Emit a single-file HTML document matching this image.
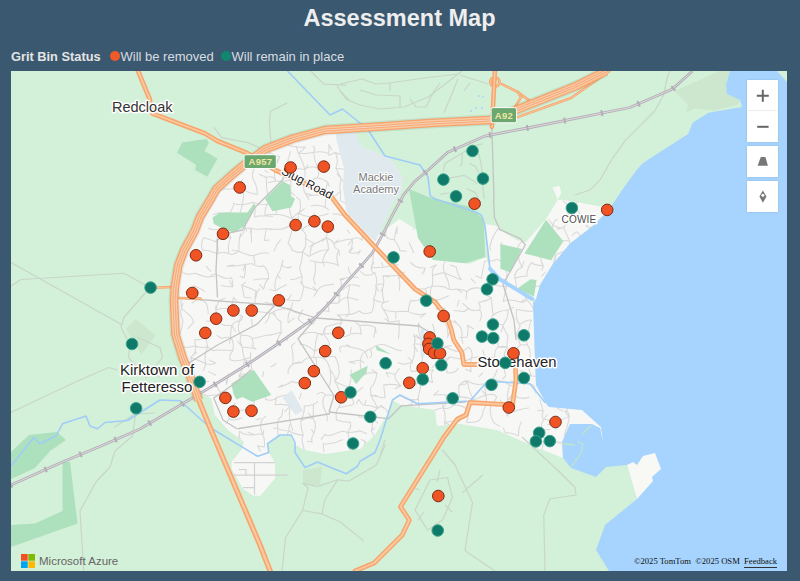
<!DOCTYPE html>
<html><head><meta charset="utf-8">
<style>
html,body{margin:0;padding:0;width:800px;height:581px;overflow:hidden;background:#3a586f;font-family:"Liberation Sans",sans-serif;}
#title{position:absolute;left:0;top:3.5px;width:799px;text-align:center;color:#eeeeee;font-weight:bold;font-size:23.5px;line-height:28px;}
#legend{position:absolute;left:11px;top:49px;width:400px;height:16px;font-size:13px;line-height:16px;color:#d8dde2;white-space:nowrap;}
#legend b{color:#e4e4e4;font-size:12.8px;}
.dot{display:inline-block;width:10px;height:10px;border-radius:50%;vertical-align:-1px;}
#map{position:absolute;left:11px;top:71px;width:776px;height:500px;overflow:hidden;background:#d3f0d8;}
#map > svg{position:absolute;left:0;top:0;}
.ctl{position:absolute;left:736px;width:31px;background:#fff;box-shadow:0 0 2px rgba(0,0,0,0.15);}
.ctl svg{position:absolute;left:0;top:0;}
#logo{position:absolute;left:10px;top:483px;width:130px;height:20px;}
#attr{position:absolute;left:623px;top:484px;font-family:"Liberation Serif",serif;font-size:8.6px;line-height:12px;color:#111;white-space:nowrap;}
</style></head><body>
<div id="title">Assessment Map</div>
<div id="legend"><b style="position:absolute;left:0">Grit Bin Status</b><span class="dot" style="position:absolute;left:99px;top:2.4px;background:#f05a28"></span><span style="position:absolute;left:109.5px">Will be removed</span><span class="dot" style="position:absolute;left:209.5px;top:2.4px;background:#12876f"></span><span style="position:absolute;left:220.5px">Will remain in place</span></div>
<div id="map">
<svg width="776" height="500" viewBox="11 71 776 500">
<defs><clipPath id="uc"><path d="M248,160 L262,151 L292,141 L325,133 L336,134 L355,132 L361,146.5 L389.9,158.6 L403.1,177.8 L400.7,192.3 L392.3,203.1 L378,236 L390,226 L399.5,219 L420,232 L440,257 L469,264 L486,257 L490,269 L500,279 L533,300 L534.5,345 L536,385 L547,405 L582,410 L601,427 L603,442 L592,424 L570,424 L562,442 L563,458 L535,447 L497,430 L460,424 L437,426 L435,410 L401,405 L392,400 L387,415 L375,435 L360,449 L325,454 L305,450 L295,445 L290,435 L280,435 L268,444 L268.2,451.4 L275,462.7 L275,478.6 L260.2,495.7 L253.4,495.7 L243.2,488.9 L231.8,469.5 L231.8,461.6 L242,449 L244,442 L228,430 L215,415 L211,398 L200,393 L193,374 L186,357 L180,335 L178,300 L179,286 L182.4,265.4 L188.4,249.9 L198.75,231 L203.9,217.2 L214.2,200 L220.6,188.8 L237.8,173.4 Z"/><path d="M485,224 L497,226 L500,230 L517,240 L526,242 L546,219 L557.8,199.8 L552.5,187.5 L559.5,185.8 L561.3,192.8 L557.8,199.8 L573.5,201.5 L601.6,206.8 L610,208 L592.8,226 L570,243.5 L552.5,264.6 L540,285 L536,299 L533,300 L500,279 L490,269 Z"/></clipPath></defs>
<rect x="0" y="0" width="800" height="600" fill="#d3f0d8"/>
<g fill="#f7f7f6"><path d="M248,160 L262,151 L292,141 L325,133 L336,134 L355,132 L361,146.5 L389.9,158.6 L403.1,177.8 L400.7,192.3 L392.3,203.1 L378,236 L390,226 L399.5,219 L420,232 L440,257 L469,264 L486,257 L490,269 L500,279 L533,300 L534.5,345 L536,385 L547,405 L582,410 L601,427 L603,442 L592,424 L570,424 L562,442 L563,458 L535,447 L497,430 L460,424 L437,426 L435,410 L401,405 L392,400 L387,415 L375,435 L360,449 L325,454 L305,450 L295,445 L290,435 L280,435 L268,444 L268.2,451.4 L275,462.7 L275,478.6 L260.2,495.7 L253.4,495.7 L243.2,488.9 L231.8,469.5 L231.8,461.6 L242,449 L244,442 L228,430 L215,415 L211,398 L200,393 L193,374 L186,357 L180,335 L178,300 L179,286 L182.4,265.4 L188.4,249.9 L198.75,231 L203.9,217.2 L214.2,200 L220.6,188.8 L237.8,173.4 Z"/><path d="M485,224 L497,226 L500,230 L517,240 L526,242 L546,219 L557.8,199.8 L552.5,187.5 L559.5,185.8 L561.3,192.8 L557.8,199.8 L573.5,201.5 L601.6,206.8 L610,208 L592.8,226 L570,243.5 L552.5,264.6 L540,285 L536,299 L533,300 L500,279 L490,269 Z"/></g>
<g clip-path="url(#uc)" fill="none" stroke-linecap="round"><path stroke="#d8d8d8" stroke-width="1.05" d="M338.6,134.9 Q338.0,142.9 339.0,143.1 M338.6,134.9 L342.2,132.7 M288.8,145.5 Q297.7,147.9 305.2,147.0 M305.2,147.0 Q303.3,150.5 298.2,153.1 M313.3,146.3 Q315.7,147.9 313.6,152.2 M328.9,144.6 Q329.3,149.5 328.6,153.9 M328.9,144.6 L332.1,150.2 M339.0,143.1 L340.9,137.7 M350.7,144.9 Q355.5,144.7 358.6,145.1 M358.6,145.1 L358.9,140.8 M269.0,152.3 Q275.9,156.0 279.7,156.6 M269.0,152.3 L268.2,157.7 M279.7,156.6 Q276.4,162.1 275.1,165.2 M279.7,156.6 L276.9,163.5 M288.5,158.3 Q286.7,161.0 290.1,169.8 M288.5,158.3 L290.4,151.6 M298.2,153.1 Q305.8,154.2 313.6,152.2 M298.2,153.1 Q304.0,164.2 304.7,169.5 M298.2,153.1 L296.2,146.6 M313.6,152.2 Q324.2,150.8 328.6,153.9 M313.6,152.2 Q314.1,159.6 317.6,167.9 M335.1,152.4 Q340.9,154.9 351.0,155.6 M335.1,152.4 Q339.2,159.0 335.8,168.2 M335.1,152.4 L328.5,155.4 M351.0,155.6 L346.9,161.0 M363.0,157.2 Q372.8,161.4 376.5,159.7 M363.0,157.2 Q362.0,160.5 363.1,168.2 M376.5,159.7 Q383.5,153.1 387.5,153.6 M256.4,165.4 Q251.1,171.2 253.0,179.3 M264.7,170.3 L268.0,172.7 M275.1,165.2 Q273.6,174.5 275.6,181.1 M290.1,169.8 Q297.2,168.0 304.7,169.5 M290.1,169.8 L287.0,173.6 M304.7,169.5 Q309.2,164.9 317.6,167.9 M304.7,169.5 Q305.5,173.4 304.8,180.9 M304.7,169.5 L308.0,164.7 M317.6,167.9 Q320.3,174.9 316.9,177.9 M335.8,168.2 Q341.2,169.1 348.3,169.8 M335.8,168.2 Q338.7,173.6 341.2,178.5 M348.3,169.8 Q344.6,175.0 348.5,183.4 M348.3,169.8 L350.2,163.6 M363.1,168.2 Q367.5,171.3 376.7,168.5 M376.7,168.5 L371.8,172.2 M242.2,179.5 Q240.1,187.6 242.1,188.1 M253.0,179.3 Q258.0,187.0 257.1,194.4 M266.2,177.3 Q274.9,175.3 275.6,181.1 M266.2,177.3 Q266.1,187.2 267.6,194.9 M266.2,177.3 L259.1,174.3 M275.6,181.1 Q285.5,181.4 291.1,180.2 M275.6,181.1 L268.2,182.8 M291.1,180.2 Q290.5,186.5 290.8,192.0 M291.1,180.2 L285.3,177.2 M304.8,180.9 Q308.6,180.6 316.9,177.9 M304.8,180.9 Q301.9,189.8 305.9,194.4 M304.8,180.9 L310.8,179.2 M316.9,177.9 Q323.5,178.3 327.9,182.5 M327.9,182.5 Q324.2,190.7 328.0,194.2 M327.9,182.5 L329.2,186.4 M341.2,178.5 Q344.7,184.6 348.5,183.4 M341.2,178.5 Q338.9,187.5 340.5,191.2 M341.2,178.5 L336.9,173.7 M348.5,183.4 Q351.4,188.3 353.2,195.0 M359.7,184.0 Q370.1,178.0 377.1,177.1 M359.7,184.0 Q365.4,187.0 363.6,194.1 M359.7,184.0 L365.6,180.7 M377.1,177.1 Q378.0,177.3 383.9,181.8 M377.1,177.1 Q379.4,185.8 376.1,191.2 M383.9,181.8 L382.7,176.0 M396.1,176.8 Q404.3,177.1 412.7,179.4 M396.1,176.8 L403.9,178.2 M219.9,191.2 Q222.4,187.5 227.6,189.3 M227.6,189.3 Q234.8,188.7 242.1,188.1 M242.1,188.1 Q247.1,193.1 257.1,194.4 M242.1,188.1 Q245.1,192.7 242.2,204.8 M242.1,188.1 L234.9,189.6 M267.6,194.9 Q270.0,196.9 267.2,204.5 M267.6,194.9 L271.6,195.8 M279.0,191.2 Q274.3,194.9 276.3,205.7 M290.8,192.0 L294.7,195.4 M305.9,194.4 Q305.9,192.5 312.1,195.3 M305.9,194.4 L308.9,199.8 M312.1,195.3 Q317.2,195.3 328.0,194.2 M312.1,195.3 L308.0,196.0 M328.0,194.2 Q325.2,196.8 325.1,207.2 M340.5,191.2 Q340.6,199.3 340.0,200.4 M340.5,191.2 L335.4,195.8 M353.2,195.0 Q360.0,197.9 363.6,194.1 M353.2,195.0 Q351.8,199.6 353.9,207.6 M376.1,191.2 Q381.1,192.7 387.8,188.6 M376.1,191.2 L383.0,190.3 M387.8,188.6 Q389.6,198.9 389.8,201.9 M233.6,203.4 Q237.1,204.6 242.2,204.8 M233.6,203.4 Q234.2,204.5 230.3,212.6 M242.2,204.8 Q246.2,204.4 252.9,202.3 M242.2,204.8 Q240.0,214.0 238.7,217.4 M252.9,202.3 Q259.0,204.9 267.2,204.5 M252.9,202.3 Q256.5,207.3 254.4,217.0 M267.2,204.5 Q267.8,201.1 276.3,205.7 M267.2,204.5 Q264.7,208.4 265.0,215.8 M276.3,205.7 Q277.7,208.1 275.7,214.7 M276.3,205.7 L275.0,198.4 M288.4,200.1 Q288.7,208.6 292.0,218.7 M288.4,200.1 L288.0,194.3 M300.0,200.3 Q301.5,210.4 298.6,213.0 M300.0,200.3 L296.5,197.2 M311.3,206.0 Q317.5,204.1 325.1,207.2 M325.1,207.2 L328.5,209.6 M340.0,200.4 Q349.5,205.4 353.9,207.6 M353.9,207.6 Q353.2,208.5 358.6,207.2 M353.9,207.6 Q351.0,207.5 352.5,215.0 M353.9,207.6 L359.5,209.9 M358.6,207.2 Q366.8,208.1 373.4,203.8 M358.6,207.2 Q357.9,214.9 363.2,219.9 M568.3,205.0 Q574.8,204.6 576.9,202.2 M568.3,205.0 Q564.9,210.1 569.3,215.5 M568.3,205.0 L563.4,201.4 M576.9,202.2 Q575.7,209.2 580.4,214.4 M219.0,212.8 L213.2,214.5 M230.3,212.6 Q232.2,221.2 227.4,230.1 M230.3,212.6 L224.9,213.3 M238.7,217.4 Q241.1,218.5 245.0,226.3 M254.4,217.0 Q256.9,215.8 265.0,215.8 M265.0,215.8 Q268.7,214.2 275.7,214.7 M265.0,215.8 L272.5,216.4 M275.7,214.7 Q280.9,213.8 292.0,218.7 M292.0,218.7 Q296.7,213.5 298.6,213.0 M292.0,218.7 Q293.0,218.0 292.4,224.5 M298.6,213.0 Q304.7,217.2 316.5,217.0 M298.6,213.0 Q296.8,222.8 302.4,230.3 M298.6,213.0 L304.4,208.8 M316.5,217.0 Q318.7,216.2 328.2,213.7 M316.5,217.0 Q312.0,224.2 310.7,224.7 M316.5,217.0 L313.8,213.6 M337.4,214.1 Q346.7,217.7 352.5,215.0 M337.4,214.1 L332.8,214.0 M363.2,219.9 Q368.3,216.7 372.6,216.4 M363.2,219.9 Q365.2,225.0 363.2,226.0 M363.2,219.9 L357.3,223.2 M372.6,216.4 Q369.1,220.0 371.8,230.1 M372.6,216.4 L375.4,211.1 M557.3,219.5 Q554.1,219.8 553.0,225.3 M569.3,215.5 Q568.1,222.2 563.6,227.4 M588.5,215.2 Q588.7,219.8 586.5,226.5 M588.5,215.2 L584.2,220.1 M208.4,228.3 Q213.3,231.2 220.7,228.5 M220.7,228.5 Q219.4,233.1 215.9,241.7 M220.7,228.5 L226.5,232.8 M227.4,230.1 Q228.1,230.9 230.8,237.8 M227.4,230.1 L222.5,224.3 M245.0,226.3 Q245.6,229.3 250.2,228.1 M245.0,226.3 Q245.3,231.1 239.5,238.2 M245.0,226.3 L246.6,231.2 M250.2,228.1 Q256.5,230.2 266.4,228.5 M250.2,228.1 Q251.9,237.5 251.4,242.1 M250.2,228.1 L251.8,232.3 M266.4,228.5 Q276.4,229.7 281.7,229.2 M266.4,228.5 Q265.0,235.3 264.5,240.4 M266.4,228.5 L271.9,229.8 M281.7,229.2 Q290.9,225.7 292.4,224.5 M292.4,224.5 Q292.7,230.5 288.1,243.1 M302.4,230.3 Q303.3,226.8 310.7,224.7 M302.4,230.3 Q307.8,235.1 305.3,238.7 M327.9,231.2 Q333.5,231.5 334.7,229.1 M327.9,231.2 Q327.1,233.8 325.9,237.8 M347.2,230.0 L349.7,233.3 M363.2,226.0 Q371.1,226.5 371.8,230.1 M363.2,226.0 Q362.4,233.6 362.2,240.1 M363.2,226.0 L364.1,220.7 M371.8,230.1 L367.6,228.8 M386.2,230.1 Q384.9,236.2 387.3,237.9 M397.2,226.7 Q395.8,230.9 394.1,239.8 M397.2,226.7 L396.9,233.4 M413.7,229.4 Q414.9,226.4 421.9,228.3 M497.7,229.1 Q505.8,232.1 506.2,229.7 M497.7,229.1 Q491.7,238.2 491.2,242.2 M543.9,231.9 Q550.5,231.2 553.0,225.3 M543.9,231.9 L547.3,235.1 M553.0,225.3 Q561.5,229.6 563.6,227.4 M553.0,225.3 Q550.4,231.4 553.8,239.7 M553.0,225.3 L548.9,219.8 M563.6,227.4 Q566.3,233.8 569.6,240.7 M563.6,227.4 L557.2,229.3 M576.3,231.8 Q579.1,232.3 580.9,238.4 M576.3,231.8 L572.2,235.3 M586.5,226.5 Q589.3,227.2 598.9,229.2 M203.5,237.7 Q208.2,238.7 215.9,241.7 M203.5,237.7 Q200.1,244.8 202.6,250.4 M215.9,241.7 Q220.7,236.6 230.8,237.8 M215.9,241.7 Q218.9,245.6 217.7,253.7 M230.8,237.8 Q227.3,244.2 228.9,253.5 M239.5,238.2 Q238.8,243.5 238.8,251.2 M239.5,238.2 L240.8,233.4 M264.5,240.4 L269.3,240.1 M280.5,239.8 Q275.7,245.0 274.1,251.0 M288.1,243.1 Q293.1,249.4 291.7,249.9 M305.3,238.7 Q308.1,239.5 314.4,243.7 M305.3,238.7 Q307.5,246.0 302.5,251.7 M314.4,243.7 Q318.1,242.6 325.9,237.8 M314.4,243.7 Q310.1,246.3 310.1,255.9 M314.4,243.7 L309.1,246.9 M325.9,237.8 Q330.6,239.0 334.4,243.6 M325.9,237.8 Q328.5,242.4 328.4,249.7 M325.9,237.8 L322.2,241.3 M334.4,243.6 Q341.8,239.7 352.4,239.1 M334.4,243.6 Q332.9,246.8 338.9,250.3 M334.4,243.6 L338.3,239.8 M352.4,239.1 Q357.5,235.8 362.2,240.1 M352.4,239.1 Q353.0,246.2 349.0,252.3 M352.4,239.1 L348.5,244.9 M387.3,237.9 Q390.9,239.5 394.1,239.8 M394.1,239.8 Q399.0,246.1 399.9,250.6 M409.0,242.4 Q411.1,246.4 413.6,252.5 M423.7,240.8 Q428.0,236.2 431.3,237.3 M423.7,240.8 L423.2,235.6 M491.2,242.2 Q488.8,247.9 490.7,249.8 M502.0,242.6 Q499.3,247.5 503.3,249.0 M520.8,242.6 Q527.2,240.6 526.7,238.2 M520.8,242.6 Q518.8,244.3 517.3,248.6 M520.8,242.6 L526.6,237.5 M543.7,236.8 Q548.4,236.5 553.8,239.7 M543.7,236.8 L540.9,241.7 M553.8,239.7 Q561.2,241.0 569.6,240.7 M569.6,240.7 L569.9,246.5 M192.5,250.5 L197.7,250.2 M202.6,250.4 Q206.9,249.8 217.7,253.7 M217.7,253.7 Q221.2,251.5 228.9,253.5 M228.9,253.5 Q230.7,256.1 238.8,251.2 M238.8,251.2 Q248.2,255.6 253.7,255.7 M238.8,251.2 L232.3,250.1 M253.7,255.7 Q262.3,251.7 268.6,253.2 M253.7,255.7 L254.9,263.5 M291.7,249.9 Q299.0,253.5 302.5,251.7 M291.7,249.9 L298.1,252.5 M302.5,251.7 Q309.4,257.7 310.1,255.9 M302.5,251.7 Q302.4,260.9 299.6,267.6 M310.1,255.9 Q320.4,249.3 328.4,249.7 M328.4,249.7 Q323.2,255.4 322.7,262.0 M338.9,250.3 Q334.8,257.1 338.6,265.6 M338.9,250.3 L339.6,255.2 M349.0,252.3 Q356.3,254.8 360.4,250.7 M349.0,252.3 L353.3,247.5 M360.4,250.7 L358.1,254.3 M373.1,253.3 Q373.5,263.8 371.0,267.8 M399.9,250.6 L406.3,251.2 M423.8,250.7 Q426.2,252.3 436.6,248.7 M503.3,249.0 Q505.9,254.4 502.3,261.4 M503.3,249.0 L500.8,253.8 M517.3,248.6 Q517.8,259.6 521.9,267.5 M517.3,248.6 L515.4,253.8 M533.4,251.4 Q538.5,251.7 542.1,253.2 M533.4,251.4 L538.1,250.7 M542.1,253.2 Q538.8,258.0 543.4,265.9 M556.1,254.6 Q560.5,252.8 565.1,250.7 M556.1,254.6 Q554.9,256.2 553.1,264.7 M556.1,254.6 L554.6,261.7 M206.1,266.3 L210.8,271.4 M227.3,266.1 Q236.8,266.3 245.2,264.4 M227.3,266.1 L233.2,264.9 M245.2,264.4 Q252.9,263.3 252.8,264.0 M245.2,264.4 Q246.0,269.3 244.1,278.0 M245.2,264.4 L243.1,270.5 M252.8,264.0 Q259.3,268.1 263.1,265.7 M263.1,265.7 Q268.5,269.0 268.7,278.8 M281.9,264.1 Q283.6,269.0 291.7,266.7 M281.9,264.1 Q281.3,270.0 277.3,275.5 M281.9,264.1 L283.0,260.0 M291.7,266.7 L287.8,268.1 M299.6,267.6 Q301.1,275.3 302.2,276.2 M315.0,261.6 Q320.6,263.4 322.7,262.0 M315.0,261.6 Q316.4,271.0 313.5,279.2 M315.0,261.6 L310.0,260.8 M322.7,262.0 Q333.7,262.6 338.6,265.6 M322.7,262.0 L324.1,265.7 M348.6,267.4 Q347.6,268.5 351.9,276.8 M360.9,263.7 L361.4,268.6 M371.0,267.8 Q373.3,267.5 383.1,267.2 M371.0,267.8 Q371.8,273.8 374.7,272.6 M371.0,267.8 L373.8,262.4 M383.1,267.2 Q387.0,266.7 398.3,264.5 M383.1,267.2 L381.6,262.5 M410.5,262.1 Q415.1,268.8 425.3,267.9 M425.3,267.9 Q422.7,274.2 422.2,273.9 M425.3,267.9 L424.1,271.9 M436.5,264.8 Q431.2,268.8 432.5,275.2 M436.5,264.8 L430.6,267.4 M443.0,266.6 Q443.7,266.0 443.9,272.5 M443.0,266.6 L444.8,261.9 M456.3,267.2 Q457.9,275.8 461.3,279.7 M456.3,267.2 L450.5,265.1 M484.6,261.5 Q487.1,260.9 494.4,260.6 M484.6,261.5 Q483.4,266.7 481.4,278.4 M494.4,260.6 Q494.7,258.0 502.3,261.4 M502.3,261.4 Q508.3,267.7 506.5,279.2 M521.9,267.5 Q514.4,269.9 514.8,278.3 M521.9,267.5 L524.0,261.4 M531.3,262.5 Q534.2,265.3 543.4,265.9 M531.3,262.5 Q526.2,270.1 527.0,276.3 M543.4,265.9 L541.9,270.2 M183.1,272.3 Q185.5,275.7 195.4,273.2 M195.4,273.2 Q205.8,277.7 209.7,276.8 M209.7,276.8 Q212.5,272.5 217.8,275.3 M209.7,276.8 L214.8,276.3 M217.8,275.3 Q227.3,280.2 231.0,277.5 M231.0,277.5 Q232.8,278.7 232.7,286.8 M244.1,278.0 L240.2,276.2 M253.9,280.0 Q257.9,278.7 268.7,278.8 M268.7,278.8 Q265.7,280.4 263.6,289.1 M277.3,275.5 Q273.6,282.9 275.5,291.0 M277.3,275.5 L280.4,278.4 M290.5,279.2 Q293.5,280.3 302.2,276.2 M302.2,276.2 Q301.2,284.1 303.8,286.5 M313.5,279.2 L315.2,284.7 M339.8,279.2 Q342.2,278.5 351.9,276.8 M339.8,279.2 Q343.1,283.0 339.6,291.5 M339.8,279.2 L343.9,279.6 M351.9,276.8 L358.1,277.4 M364.0,274.4 Q370.3,276.8 374.7,272.6 M364.0,274.4 L360.0,271.2 M374.7,272.6 Q378.2,280.5 375.7,285.6 M383.0,275.6 Q394.1,276.0 398.0,275.2 M383.0,275.6 Q384.4,279.2 383.4,285.9 M383.0,275.6 L389.2,277.2 M398.0,275.2 Q399.0,278.6 406.4,277.6 M398.0,275.2 Q400.7,280.9 399.3,290.3 M398.0,275.2 L404.7,272.1 M432.5,275.2 Q437.2,274.4 443.9,272.5 M432.5,275.2 Q433.3,283.7 431.8,286.4 M443.9,272.5 Q448.8,275.1 461.3,279.7 M443.9,272.5 Q449.4,281.3 449.4,289.3 M471.3,278.9 L475.4,283.0 M481.4,278.4 L475.9,275.7 M491.8,278.0 Q496.6,280.9 506.5,279.2 M491.8,278.0 Q490.8,279.4 494.2,284.4 M491.8,278.0 L493.3,282.0 M506.5,279.2 Q507.8,283.6 506.8,286.3 M514.8,278.3 Q521.8,275.7 527.0,276.3 M514.8,278.3 Q516.9,282.1 516.0,290.4 M545.6,272.0 L541.6,276.1 M185.5,291.8 L193.1,289.5 M193.8,285.7 Q203.0,289.5 204.4,291.4 M193.8,285.7 Q191.7,289.0 196.3,300.1 M221.2,285.6 Q228.9,287.0 232.7,286.8 M232.7,286.8 L229.6,280.8 M241.8,285.4 Q253.2,288.5 257.0,292.0 M241.8,285.4 Q243.1,290.2 244.2,297.3 M241.8,285.4 L245.4,282.3 M257.0,292.0 Q256.1,298.9 254.9,297.9 M257.0,292.0 L259.6,288.8 M263.6,289.1 L259.8,284.6 M275.5,291.0 Q279.8,287.5 286.4,284.8 M275.5,291.0 L269.8,289.6 M303.8,286.5 Q314.1,289.5 317.2,291.0 M303.8,286.5 Q302.2,296.5 299.8,300.6 M303.8,286.5 L300.2,281.7 M317.2,291.0 Q319.7,285.9 327.7,285.1 M317.2,291.0 Q315.0,294.4 314.0,296.3 M317.2,291.0 L312.9,286.9 M327.7,285.1 L333.8,284.2 M339.6,291.5 Q342.6,289.8 349.6,284.6 M339.6,291.5 Q340.5,295.3 338.6,303.0 M349.6,284.6 Q357.6,285.1 359.8,286.5 M349.6,284.6 Q349.1,291.1 347.4,297.2 M375.7,285.6 Q383.5,281.9 383.4,285.9 M375.7,285.6 Q377.1,290.8 373.5,299.5 M375.7,285.6 L378.4,290.9 M383.4,285.9 Q381.1,290.2 384.1,302.4 M383.4,285.9 L381.1,291.4 M425.1,288.7 Q427.4,287.4 431.8,286.4 M425.1,288.7 Q428.1,293.2 424.3,297.9 M425.1,288.7 L417.9,289.1 M431.8,286.4 Q441.3,284.6 449.4,289.3 M431.8,286.4 Q429.0,292.5 431.2,298.5 M449.4,289.3 Q454.3,289.9 456.2,289.1 M456.2,289.1 Q465.4,290.1 466.7,291.9 M456.2,289.1 L461.9,292.5 M466.7,291.9 Q470.4,286.7 481.5,288.2 M466.7,291.9 L466.1,298.9 M481.5,288.2 Q485.1,287.7 494.2,284.4 M494.2,284.4 Q500.8,286.9 506.8,286.3 M506.8,286.3 Q513.6,285.2 516.0,290.4 M506.8,286.3 Q505.1,291.4 503.3,301.5 M516.0,290.4 Q524.9,287.8 526.7,286.3 M526.7,286.3 Q537.5,286.1 544.0,286.0 M526.7,286.3 Q523.6,294.1 526.5,299.3 M180.9,301.3 Q181.3,303.8 181.4,308.6 M180.9,301.3 L181.4,297.3 M196.3,300.1 Q201.2,298.6 206.0,302.8 M196.3,300.1 L192.2,303.0 M206.0,302.8 Q208.5,307.7 208.1,313.9 M219.5,300.2 Q217.6,303.1 215.8,310.0 M219.5,300.2 L225.1,298.2 M233.6,297.4 Q233.1,300.6 230.4,309.9 M233.6,297.4 L236.5,300.3 M244.2,297.3 L251.2,297.9 M254.9,297.9 Q256.0,300.8 252.9,310.7 M254.9,297.9 L256.1,290.9 M265.5,302.2 Q273.0,304.7 280.3,302.3 M280.3,302.3 Q280.6,298.6 287.9,299.9 M287.9,299.9 Q294.9,300.8 299.8,300.6 M287.9,299.9 L291.2,294.8 M326.8,301.7 Q329.5,303.6 338.6,303.0 M326.8,301.7 Q328.8,307.1 329.1,311.7 M338.6,303.0 Q340.9,298.5 347.4,297.2 M347.4,297.2 Q351.3,298.2 358.1,300.0 M347.4,297.2 Q349.3,307.8 349.0,314.3 M373.5,299.5 Q378.4,302.2 384.1,302.4 M373.5,299.5 Q375.1,305.3 371.5,312.4 M384.1,302.4 Q379.8,304.2 383.3,309.6 M384.1,302.4 L388.4,301.0 M410.6,300.3 Q413.6,302.2 424.3,297.9 M410.6,300.3 Q407.9,309.5 408.5,311.6 M424.3,297.9 L420.0,297.8 M431.2,298.5 Q436.7,301.0 442.3,298.5 M431.2,298.5 Q435.4,301.2 436.9,309.6 M431.2,298.5 L437.1,300.8 M442.3,298.5 L448.7,295.8 M459.0,300.2 L457.3,306.2 M478.7,302.6 Q488.6,300.0 491.4,298.0 M478.7,302.6 Q481.2,307.4 479.5,310.1 M491.4,298.0 Q492.0,306.4 493.1,315.4 M491.4,298.0 L487.4,295.8 M503.3,301.5 Q508.9,298.1 520.6,302.3 M520.6,302.3 Q526.8,301.7 526.5,299.3 M520.6,302.3 L525.0,299.1 M526.5,299.3 Q533.6,306.5 533.5,310.9 M526.5,299.3 L525.9,294.7 M181.4,308.6 Q184.9,311.0 190.3,316.0 M181.4,308.6 Q179.4,313.6 182.8,320.3 M181.4,308.6 L182.9,303.4 M190.3,316.0 Q195.2,322.7 192.5,323.4 M215.8,310.0 Q223.9,306.5 230.4,309.9 M215.8,310.0 Q216.4,317.0 219.7,322.1 M215.8,310.0 L215.9,305.7 M230.4,309.9 Q235.9,315.4 241.7,315.5 M230.4,309.9 L227.9,305.7 M241.7,315.5 Q244.1,318.1 239.2,321.6 M241.7,315.5 L238.8,322.7 M252.9,310.7 Q259.3,312.1 269.8,312.9 M269.8,312.9 Q270.7,313.8 274.3,311.2 M269.8,312.9 Q269.1,319.4 265.2,323.1 M269.8,312.9 L274.3,314.3 M274.3,311.2 Q280.2,308.1 291.2,308.5 M274.3,311.2 Q273.8,316.7 280.9,321.8 M291.2,308.5 Q292.7,312.8 300.7,313.6 M291.2,308.5 Q286.9,315.5 288.3,322.8 M291.2,308.5 L292.5,302.6 M300.7,313.6 Q296.5,319.5 299.7,320.3 M300.7,313.6 L302.8,309.6 M316.9,312.7 Q323.3,309.5 329.1,311.7 M316.9,312.7 Q317.0,322.4 310.2,325.0 M337.1,314.7 Q340.5,315.6 349.0,314.3 M337.1,314.7 Q340.9,314.9 341.8,322.4 M337.1,314.7 L342.5,319.3 M349.0,314.3 Q352.7,314.8 359.7,310.8 M349.0,314.3 L345.9,316.8 M359.7,310.8 Q361.9,315.3 371.5,312.4 M383.3,309.6 Q389.0,311.6 395.7,311.7 M383.3,309.6 Q387.4,314.5 388.9,321.9 M395.7,311.7 Q402.0,311.1 408.5,311.6 M395.7,311.7 L396.0,318.6 M408.5,311.6 Q417.0,316.5 425.9,313.4 M425.9,313.4 L420.4,317.7 M436.9,309.6 Q440.7,307.3 445.1,308.6 M459.5,310.9 Q465.1,313.0 468.2,308.1 M459.5,310.9 L453.9,310.5 M468.2,308.1 Q471.4,311.5 479.5,310.1 M468.2,308.1 L462.7,303.3 M479.5,310.1 Q483.3,312.9 479.9,320.7 M493.1,315.4 Q497.8,310.9 507.7,310.1 M493.1,315.4 Q490.3,315.7 492.7,323.4 M507.7,310.1 Q509.1,316.8 503.2,324.7 M507.7,310.1 L513.6,307.2 M516.9,309.2 Q527.2,312.0 533.5,310.9 M516.9,309.2 Q514.8,318.7 519.6,324.4 M182.8,320.3 Q183.1,325.4 179.5,335.8 M192.5,323.4 L187.9,328.6 M206.4,321.1 Q209.3,320.9 219.7,322.1 M219.7,322.1 Q222.4,326.4 231.8,325.3 M231.8,325.3 Q237.5,319.6 239.2,321.6 M231.8,325.3 Q230.0,334.8 231.0,337.0 M231.8,325.3 L235.5,331.2 M239.2,321.6 Q236.8,331.3 241.3,335.3 M252.2,325.7 L251.8,319.1 M280.9,321.8 Q280.7,328.2 281.3,332.3 M288.3,322.8 L294.3,318.2 M299.7,320.3 Q301.2,323.5 310.2,325.0 M326.5,326.5 Q335.5,323.9 341.8,322.4 M326.5,326.5 Q323.2,329.1 323.5,333.8 M341.8,322.4 Q337.1,330.4 339.4,333.9 M351.4,327.4 L350.2,333.1 M359.7,325.5 Q370.1,324.2 375.3,327.6 M359.7,325.5 Q360.0,326.1 361.2,333.9 M359.7,325.5 L354.7,321.6 M375.3,327.6 Q375.1,332.6 373.9,337.2 M375.3,327.6 L376.1,332.2 M388.9,321.9 Q392.9,322.0 399.1,320.7 M388.9,321.9 L385.0,318.7 M399.1,320.7 Q399.5,331.6 398.5,338.6 M418.5,323.1 Q417.8,332.1 420.8,339.1 M418.5,323.1 L420.4,327.0 M432.6,324.0 Q435.9,333.3 432.5,337.7 M444.2,321.3 Q449.3,319.0 457.2,323.8 M444.2,321.3 Q448.9,327.8 447.6,337.5 M444.2,321.3 L449.7,320.6 M457.2,323.8 Q463.2,327.8 461.7,338.6 M457.2,323.8 L454.7,320.5 M467.3,325.3 Q468.7,327.8 467.3,337.0 M467.3,325.3 L473.5,329.0 M492.7,323.4 Q500.2,324.1 503.2,324.7 M503.2,324.7 Q502.7,327.1 508.0,336.3 M503.2,324.7 L501.3,332.2 M519.6,324.4 Q527.7,319.3 531.6,320.2 M519.6,324.4 Q521.1,327.0 515.9,334.0 M531.6,320.2 Q528.9,323.9 528.6,333.4 M194.9,339.6 Q200.7,340.7 204.9,336.6 M194.9,339.6 Q194.7,341.6 195.7,346.0 M204.9,336.6 Q206.0,337.7 207.7,346.6 M221.5,338.2 Q223.4,337.6 231.0,337.0 M221.5,338.2 L217.0,335.6 M231.0,337.0 Q234.6,343.4 232.7,350.6 M231.0,337.0 L229.4,343.3 M241.3,335.3 Q250.0,334.7 252.2,338.6 M241.3,335.3 Q238.5,341.0 242.5,347.4 M252.2,338.6 Q258.0,337.2 269.0,335.1 M252.2,338.6 L253.4,344.9 M269.0,335.1 Q271.4,335.2 281.3,332.3 M281.3,332.3 Q276.6,340.5 275.0,347.0 M287.1,336.1 L287.4,340.4 M300.5,334.9 Q309.8,330.7 317.8,333.2 M317.8,333.2 Q324.4,334.5 323.5,333.8 M317.8,333.2 Q315.3,341.3 314.7,351.5 M317.8,333.2 L322.4,335.2 M323.5,333.8 Q331.1,333.7 339.4,333.9 M323.5,333.8 Q330.0,342.5 329.8,345.1 M323.5,333.8 L325.3,328.7 M339.4,333.9 L339.1,328.5 M346.0,336.4 Q352.9,332.0 361.2,333.9 M346.0,336.4 L338.8,336.5 M413.8,334.7 Q414.8,336.9 420.8,339.1 M413.8,334.7 Q415.6,340.9 413.9,345.0 M413.8,334.7 L415.4,340.9 M420.8,339.1 Q428.1,338.2 432.5,337.7 M420.8,339.1 Q422.2,345.4 420.6,344.2 M420.8,339.1 L416.0,334.8 M447.6,337.5 L450.1,331.3 M461.7,338.6 L462.9,343.4 M467.3,337.0 L459.8,337.7 M493.0,334.3 Q499.1,339.0 497.8,347.1 M508.0,336.3 Q506.2,345.6 507.6,348.4 M515.9,334.0 Q519.2,341.5 520.4,345.2 M528.6,333.4 Q524.8,336.5 527.4,344.9 M528.6,333.4 L523.8,331.2 M184.4,347.1 Q186.7,348.1 195.7,346.0 M184.4,347.1 L176.5,346.5 M195.7,346.0 Q202.0,348.8 207.7,346.6 M195.7,346.0 Q196.2,353.9 190.6,357.5 M207.7,346.6 Q212.1,351.9 216.7,350.1 M207.7,346.6 Q203.5,356.4 205.9,364.0 M216.7,350.1 Q222.2,350.0 232.7,350.6 M232.7,350.6 Q228.9,355.7 229.9,359.3 M242.5,347.4 Q245.8,346.7 255.7,349.0 M242.5,347.4 Q242.2,350.6 244.5,359.2 M242.5,347.4 L237.8,341.2 M255.7,349.0 L251.6,345.4 M275.0,347.0 L271.0,348.7 M291.4,345.8 Q293.7,353.7 292.9,364.0 M291.4,345.8 L294.8,342.9 M299.5,344.1 Q307.2,344.3 314.7,351.5 M314.7,351.5 Q323.2,345.3 329.8,345.1 M314.7,351.5 L313.5,357.2 M339.5,347.4 Q344.1,344.9 351.1,347.2 M339.5,347.4 L340.6,352.0 M351.1,347.2 Q361.0,349.0 365.5,351.9 M351.1,347.2 L346.7,344.7 M365.5,351.9 Q369.7,347.5 370.4,349.7 M365.5,351.9 Q361.0,354.3 360.5,360.1 M365.5,351.9 L367.5,357.9 M370.4,349.7 Q374.6,345.1 382.9,344.3 M370.4,349.7 Q372.9,355.2 370.1,357.7 M382.9,344.3 Q387.1,345.6 396.3,349.8 M396.3,349.8 L401.6,350.8 M413.9,345.0 Q413.3,343.4 420.6,344.2 M413.9,345.0 Q416.1,351.1 412.3,361.9 M413.9,345.0 L417.3,351.5 M420.6,344.2 Q427.0,343.8 434.3,347.9 M420.6,344.2 Q424.9,355.0 421.2,362.4 M434.3,347.9 Q443.5,350.9 445.0,346.5 M434.3,347.9 L440.2,349.7 M445.0,346.5 Q455.6,352.6 460.4,350.7 M445.0,346.5 L451.4,345.8 M460.4,350.7 Q462.0,352.6 468.3,347.1 M468.3,347.1 Q473.5,351.0 471.6,358.0 M482.9,350.1 Q484.3,356.5 485.3,356.2 M497.8,347.1 Q505.5,345.1 507.6,348.4 M497.8,347.1 Q494.8,348.8 494.6,357.8 M497.8,347.1 L505.7,347.2 M507.6,348.4 Q502.8,351.8 505.1,359.0 M520.4,345.2 Q520.7,344.4 527.4,344.9 M520.4,345.2 L515.9,349.5 M527.4,344.9 Q532.1,351.0 528.9,361.1 M190.6,357.5 Q201.6,361.1 205.9,364.0 M190.6,357.5 Q194.4,367.1 193.2,370.6 M190.6,357.5 L196.4,352.2 M205.9,364.0 Q213.1,365.2 215.6,362.9 M205.9,364.0 L203.1,370.7 M215.6,362.9 L209.4,360.0 M229.9,359.3 Q233.3,362.4 244.5,359.2 M244.5,359.2 Q247.0,362.3 250.5,360.4 M244.5,359.2 Q243.4,369.2 238.9,375.9 M244.5,359.2 L250.7,357.2 M250.5,360.4 Q251.2,366.4 253.4,375.7 M250.5,360.4 L250.6,352.4 M276.2,363.5 L271.2,366.8 M292.9,364.0 Q300.4,362.3 301.5,362.7 M292.9,364.0 Q287.2,369.0 288.2,373.4 M292.9,364.0 L299.1,361.8 M301.5,362.7 Q305.9,356.4 315.8,357.4 M315.8,357.4 Q319.1,356.7 322.2,357.4 M315.8,357.4 L316.6,364.5 M322.2,357.4 Q327.2,356.4 335.0,356.6 M322.2,357.4 Q328.1,360.0 329.9,369.2 M335.0,356.6 Q338.8,362.7 339.1,371.0 M348.9,362.0 Q353.2,361.6 360.5,360.1 M348.9,362.0 L354.9,363.5 M360.5,360.1 Q359.4,368.6 362.9,375.1 M360.5,360.1 L363.9,362.7 M398.2,362.5 Q404.3,366.0 412.3,361.9 M412.3,361.9 Q408.7,365.4 411.5,371.6 M412.3,361.9 L407.9,357.0 M421.2,362.4 L422.4,366.7 M436.6,362.1 Q446.6,359.2 449.9,356.8 M436.6,362.1 L432.2,367.8 M449.9,356.8 Q457.6,358.8 461.6,359.2 M449.9,356.8 L444.8,362.9 M461.6,359.2 Q464.9,362.6 471.6,358.0 M471.6,358.0 Q479.4,356.2 485.3,356.2 M471.6,358.0 Q469.7,362.6 471.0,371.6 M485.3,356.2 Q486.9,357.1 494.6,357.8 M494.6,357.8 L490.6,357.6 M505.1,359.0 Q502.4,364.4 505.7,375.9 M505.1,359.0 L500.3,359.7 M519.3,362.5 Q521.1,365.4 528.9,361.1 M528.9,361.1 Q532.5,362.7 540.8,358.2 M528.9,361.1 Q527.6,369.7 531.9,375.9 M193.2,370.6 L192.4,362.9 M215.6,375.0 L208.7,371.6 M228.6,374.0 Q227.2,382.2 226.6,384.4 M238.9,375.9 Q249.6,377.9 253.4,375.7 M238.9,375.9 Q243.2,382.9 244.3,383.9 M238.9,375.9 L244.1,373.7 M253.4,375.7 Q251.2,379.5 251.9,386.4 M253.4,375.7 L249.5,369.7 M263.8,371.3 L262.5,376.7 M311.5,370.9 L318.2,372.1 M329.9,369.2 Q332.2,380.0 328.9,386.7 M329.9,369.2 L333.6,374.7 M339.1,371.0 Q340.3,374.0 334.9,381.5 M351.2,369.7 Q351.7,378.6 349.1,386.8 M362.9,375.1 Q369.2,371.9 376.9,373.0 M362.9,375.1 L366.4,372.9 M376.9,373.0 Q375.5,384.1 370.6,387.9 M376.9,373.0 L372.1,370.0 M386.0,372.5 Q393.2,373.6 394.9,374.7 M386.0,372.5 L388.6,376.7 M394.9,374.7 Q394.1,379.3 401.0,385.8 M394.9,374.7 L399.1,368.6 M411.5,371.6 Q419.4,370.3 423.3,371.4 M423.3,371.4 Q428.0,370.0 433.1,369.8 M423.3,371.4 Q422.8,377.3 421.4,380.1 M423.3,371.4 L416.1,370.5 M433.1,369.8 Q430.0,374.4 432.7,382.5 M446.8,372.6 Q455.5,374.1 458.1,368.3 M446.8,372.6 L446.6,366.6 M471.0,371.6 L465.8,369.2 M482.7,372.8 L479.3,376.4 M497.5,369.2 Q493.8,378.8 491.0,380.9 M505.7,375.9 L502.7,379.1 M519.9,370.5 Q525.5,373.0 531.9,375.9 M531.9,375.9 Q534.0,376.9 541.2,374.9 M531.9,375.9 L526.3,376.1 M208.9,381.6 L203.9,381.7 M216.2,385.1 Q220.9,393.8 221.5,395.1 M226.6,384.4 L226.0,379.7 M244.3,383.9 Q248.8,383.3 251.9,386.4 M251.9,386.4 Q252.4,388.9 253.4,394.3 M278.4,387.2 Q284.3,386.2 292.4,381.2 M278.4,387.2 L282.7,384.9 M292.4,381.2 Q297.0,384.3 300.9,380.8 M300.9,380.8 L303.9,385.8 M334.9,381.5 Q345.3,386.8 349.1,386.8 M334.9,381.5 Q341.0,391.5 340.6,398.8 M334.9,381.5 L334.7,375.8 M362.9,387.2 L357.7,391.7 M370.6,387.9 Q370.7,389.6 370.7,394.9 M383.7,385.0 Q390.7,383.4 401.0,385.8 M383.7,385.0 Q384.8,394.3 385.0,397.8 M401.0,385.8 L395.1,388.7 M407.6,385.3 Q416.5,386.1 421.4,380.1 M407.6,385.3 L411.8,382.9 M421.4,380.1 Q428.0,380.1 432.7,382.5 M421.4,380.1 Q420.7,388.9 418.2,397.1 M458.8,385.6 Q464.3,380.2 467.4,381.0 M458.8,385.6 Q458.7,392.6 459.4,396.8 M458.8,385.6 L463.8,384.2 M467.4,381.0 Q475.2,386.1 483.6,383.7 M467.4,381.0 Q468.6,391.5 473.8,399.8 M467.4,381.0 L464.9,384.8 M483.6,383.7 Q485.4,387.4 485.9,395.2 M491.0,380.9 Q501.9,379.4 509.5,384.9 M491.0,380.9 L496.5,379.2 M509.5,384.9 Q506.5,396.3 507.6,400.0 M509.5,384.9 L514.4,386.1 M516.9,381.6 Q525.6,382.6 534.0,385.5 M516.9,381.6 Q515.5,388.4 514.5,395.7 M516.9,381.6 L510.6,380.9 M534.0,385.5 L535.8,393.1 M207.4,395.6 Q212.9,394.7 221.5,395.1 M207.4,395.6 Q206.2,406.3 209.6,411.2 M207.4,395.6 L201.3,393.8 M221.5,395.1 Q226.2,393.0 231.9,396.8 M231.9,396.8 L225.5,398.5 M241.6,392.5 Q251.0,393.3 253.4,394.3 M241.6,392.5 L236.4,396.9 M253.4,394.3 Q255.8,403.2 252.4,408.1 M253.4,394.3 L251.8,388.4 M265.5,399.6 Q274.1,401.4 276.3,397.6 M265.5,399.6 L266.2,395.5 M276.3,397.6 Q282.3,395.8 291.4,394.0 M276.3,397.6 Q276.1,400.6 275.0,404.7 M291.4,394.0 Q288.3,398.1 290.1,406.4 M291.4,394.0 L286.0,396.7 M301.3,393.1 L299.6,398.9 M317.2,394.0 Q322.3,390.7 325.4,394.7 M325.4,394.7 Q336.9,395.3 340.6,398.8 M325.4,394.7 Q321.4,399.1 323.7,407.6 M340.6,398.8 Q342.6,400.5 338.5,407.7 M340.6,398.8 L335.0,396.2 M350.7,396.4 Q355.0,401.7 352.8,404.8 M358.8,399.2 Q362.3,405.7 364.8,405.2 M358.8,399.2 L356.3,403.8 M370.7,394.9 Q380.0,397.5 385.0,397.8 M370.7,394.9 Q375.9,404.6 377.8,408.2 M370.7,394.9 L377.1,395.7 M399.4,394.8 Q406.8,400.5 413.2,399.6 M413.2,399.6 Q418.8,400.5 418.2,397.1 M413.2,399.6 L410.7,407.1 M418.2,397.1 Q418.9,403.2 419.2,410.5 M433.8,394.9 Q443.0,394.6 445.7,394.5 M433.8,394.9 L438.4,390.9 M445.7,394.5 Q448.0,401.9 443.3,408.2 M459.4,396.8 Q466.2,396.5 473.8,399.8 M459.4,396.8 Q454.9,397.5 454.2,404.9 M459.4,396.8 L465.9,398.0 M473.8,399.8 Q483.1,396.0 485.9,395.2 M473.8,399.8 Q471.5,404.1 468.4,411.7 M485.9,395.2 Q494.7,392.5 496.6,397.2 M485.9,395.2 Q487.6,404.5 483.1,410.8 M485.9,395.2 L482.5,390.9 M496.6,397.2 Q493.8,403.5 490.4,407.3 M507.6,400.0 Q511.6,398.4 514.5,395.7 M507.6,400.0 L512.7,394.2 M514.5,395.7 Q521.1,400.2 529.2,397.2 M539.7,399.9 Q540.5,401.6 543.2,411.1 M230.3,408.3 Q228.2,416.8 229.0,418.5 M230.3,408.3 L235.4,403.3 M238.9,410.3 Q243.3,411.0 252.4,408.1 M238.9,410.3 L234.2,409.4 M252.4,408.1 L249.2,410.5 M275.0,404.7 Q286.1,403.6 290.1,406.4 M290.1,406.4 Q288.4,416.9 290.7,423.7 M290.1,406.4 L284.6,411.8 M304.2,406.0 Q306.0,406.4 313.3,404.4 M304.2,406.0 Q304.9,412.3 300.9,420.8 M313.3,404.4 Q313.5,411.0 313.0,418.4 M313.3,404.4 L317.9,401.6 M323.7,407.6 Q328.9,418.0 326.9,420.7 M338.5,407.7 Q346.9,406.0 352.8,404.8 M338.5,407.7 Q335.2,411.0 336.5,420.0 M364.8,405.2 Q371.7,405.1 377.8,408.2 M364.8,405.2 L365.9,400.2 M377.8,408.2 Q378.2,404.9 385.3,408.9 M377.8,408.2 Q371.0,412.6 372.0,418.2 M377.8,408.2 L380.8,405.4 M385.3,408.9 Q389.5,413.0 388.4,419.4 M385.3,408.9 L381.1,405.4 M409.3,404.1 Q411.3,408.7 419.2,410.5 M435.9,409.7 Q441.7,407.7 443.3,408.2 M435.9,409.7 L429.4,413.7 M443.3,408.2 Q448.1,409.8 454.2,404.9 M443.3,408.2 Q446.4,415.7 444.5,422.6 M443.3,408.2 L442.0,401.8 M454.2,404.9 Q465.3,405.0 468.4,411.7 M468.4,411.7 Q469.4,413.3 466.5,422.1 M483.1,410.8 Q482.7,417.5 478.4,421.0 M490.4,407.3 Q489.4,415.6 494.4,423.4 M502.6,406.1 Q508.5,411.4 514.9,411.4 M502.6,406.1 Q507.8,409.9 507.1,416.2 M502.6,406.1 L500.6,400.1 M514.9,411.4 Q519.0,409.0 528.6,407.9 M543.2,411.1 Q540.7,418.0 543.9,419.3 M543.2,411.1 L537.7,410.3 M557.6,408.5 L563.0,410.9 M566.0,411.2 Q568.3,410.4 569.3,416.6 M566.0,411.2 L568.5,406.7 M229.0,418.5 Q232.9,421.7 241.9,417.8 M229.0,418.5 L226.4,423.3 M256.0,419.9 L260.4,418.2 M262.1,419.3 Q258.8,428.4 263.0,435.0 M262.1,419.3 L265.7,416.2 M281.7,416.1 Q276.1,420.4 277.8,428.3 M281.7,416.1 L282.8,409.1 M290.7,423.7 Q287.8,426.3 289.5,431.0 M290.7,423.7 L292.7,430.4 M300.9,420.8 Q307.2,416.7 313.0,418.4 M300.9,420.8 Q300.5,427.8 303.4,435.4 M313.0,418.4 Q317.4,424.0 313.9,433.5 M313.0,418.4 L308.3,413.1 M336.5,420.0 Q346.9,422.9 350.1,422.0 M350.1,422.0 Q352.3,426.9 347.3,432.7 M358.4,416.7 Q365.3,417.9 372.0,418.2 M372.0,418.2 Q373.3,424.7 371.3,430.8 M372.0,418.2 L377.7,423.2 M444.5,422.6 Q451.0,420.5 460.3,421.1 M444.5,422.6 Q445.1,425.1 447.6,429.9 M444.5,422.6 L448.7,424.5 M460.3,421.1 L455.1,422.9 M466.5,422.1 Q469.8,423.5 478.4,421.0 M494.4,423.4 L499.6,426.1 M507.1,416.2 L509.0,412.5 M521.5,422.0 Q518.4,426.8 518.5,435.8 M543.9,419.3 Q546.0,418.3 555.4,423.9 M543.9,419.3 Q540.3,423.0 541.9,429.9 M543.9,419.3 L547.1,415.0 M555.4,423.9 Q564.7,417.7 569.3,416.6 M555.4,423.9 L547.8,424.6 M569.3,416.6 Q568.0,425.7 564.5,434.8 M569.3,416.6 L564.8,411.4 M239.7,431.3 Q244.6,435.8 254.3,434.7 M239.7,431.3 Q237.8,439.1 243.5,442.9 M239.7,431.3 L238.6,438.9 M254.3,434.7 Q261.3,433.0 263.0,435.0 M254.3,434.7 L248.1,432.2 M263.0,435.0 Q265.0,438.3 264.3,446.9 M263.0,435.0 L263.8,430.4 M277.8,428.3 Q280.5,430.3 289.5,431.0 M277.8,428.3 Q277.7,439.0 279.8,442.1 M277.8,428.3 L273.7,428.2 M289.5,431.0 Q293.3,434.2 303.4,435.4 M289.5,431.0 Q286.1,432.7 288.0,440.2 M303.4,435.4 Q301.4,436.9 302.3,442.0 M313.9,433.5 Q310.4,438.8 312.3,442.0 M313.9,433.5 L311.6,429.5 M325.1,434.2 Q326.5,436.9 334.8,433.9 M325.1,434.2 L321.1,439.4 M334.8,433.9 Q343.7,429.4 347.3,432.7 M347.3,432.7 Q357.4,432.1 359.6,430.8 M347.3,432.7 Q349.8,434.6 348.2,444.1 M359.6,430.8 L366.4,433.6 M371.3,430.8 Q377.5,441.3 376.9,446.8 M371.3,430.8 L374.3,428.1 M505.5,432.9 Q509.6,432.1 518.5,435.8 M505.5,432.9 Q501.0,444.0 503.9,447.6 M505.5,432.9 L503.2,428.0 M518.5,435.8 L518.9,429.6 M533.3,431.6 Q535.0,433.1 541.9,429.9 M533.3,431.6 L539.1,431.2 M541.9,429.9 Q542.4,436.4 545.2,440.8 M541.9,429.9 L549.9,429.6 M556.0,428.8 L557.0,421.4 M564.5,434.8 Q569.9,435.4 574.3,433.6 M564.5,434.8 Q563.5,436.1 569.9,442.5 M600.7,429.2 L603.5,434.1 M257.6,445.7 Q259.0,446.2 264.3,446.9 M257.6,445.7 L260.3,451.0 M302.3,442.0 Q305.2,451.4 305.5,459.8 M312.3,442.0 L307.3,441.3 M323.1,443.9 Q326.2,444.6 336.2,442.3 M323.1,443.9 L324.0,451.8 M336.2,442.3 L342.6,439.8 M348.2,444.1 Q349.0,447.0 350.7,457.5 M348.2,444.1 L349.1,439.7 M365.0,441.3 Q369.7,447.8 376.9,446.8 M365.0,441.3 Q363.3,449.4 362.9,456.9 M365.0,441.3 L361.0,439.6 M531.3,440.6 Q536.8,444.7 545.2,440.8 M531.3,440.6 Q528.1,447.3 528.1,456.7 M531.3,440.6 L534.0,445.1 M545.2,440.8 Q541.5,444.1 542.2,454.7 M554.5,441.0 Q560.4,444.5 569.9,442.5"/></g>
<path fill="#dfe9ee" d="M335.7,134.5 L355,132 L361,146.5 L389.9,158.6 L403.1,177.8 L400.7,192.3 L392.3,203.1 L375.4,241.7 L365.8,233.3 L346.5,211.6 L342.9,187.5 L344,168.2 L336.9,141.7 Z"/>
<path fill="#dfe9ee" d="M282.6,398 L291.6,390.3 L303.2,411 L295.5,414.8 Z"/>
<path fill="#dfe9ee" d="M420.6,328.4 L424.5,328.4 L424.5,356.8 L420.6,356.8 Z"/>
<path fill="#cce7cd" d="M674.6,91.3 L719.6,71 L730,71 L726.4,84.5 L727.5,94 L740,100 L737.6,104.8 L715,110.4 L694.9,108.2 L685.9,112.7 L688.1,104.8 Z M303,470 L322,467 L320,485 L303,485 Z M126,329 L136,318.7 L155.5,335.5 L141.3,354.8 Z"/>
<g fill="#ade0bc"><path d="M177,152.7 L182.2,142.4 L206.3,139 L208.9,142.4 L204.6,151 L217.5,158.7 L207.2,176.8 L195.1,169.9 L196,164.8 Z"/><path d="M212.5,217.5 L220,212.5 L247.5,212.5 L253.75,203.75 L256,206 L245,226 L233.75,232.5 L222.5,228.75 L213.75,223.75 Z"/><path d="M265,198.75 L282.5,181.25 L290,185 L291.25,196.25 L295,198.75 L291.25,207.5 L272.5,211.25 Z"/><path d="M409,189 L431,198 L471,207 L483.6,219.8 L485.2,257 L465,263.2 L433,260 L418,238 Z"/><path d="M500.4,243.9 L522,249 L510,272.3 L500.4,268.8 Z"/><path d="M524.5,253.4 L546,219.8 L563.3,241.3 L551.2,260.2 Z"/><path d="M518.5,287.8 L530.6,279.2 L536.6,280 L534,296.4 L518.5,289.5 Z"/><path d="M349.7,374.8 L367.7,365.8 L366.5,372.3 L356.1,383.9 Z"/><path d="M375.5,345.2 L391,354.2 L376.8,350.3 Z"/><path d="M231.25,383.75 L251.25,371.25 L253.75,370 L271.25,395 L252.5,401.9 L242.5,396.9 L236.25,399.4 L233.75,394.4 Z"/><path d="M11,452 L29,435 L57,432 L66,440 L50,451 L35,468 L11,479 Z"/><path d="M62.5,462 L70,462 L77.5,523.5 L11,547 L11,525 L35,523.5 L62.5,511 Z"/></g>
<g fill="none" stroke="#c9d6ca" stroke-width="1.2" stroke-linejoin="round"><path d="M11,286 L21,279.5 L123.75,273.25 L150,287.5"/><path d="M150,287.5 L123.75,317.5 L121,327.5 L130,345 L128.4,357.4 L146.5,378"/><path d="M11,262.5 L122.5,325"/><path d="M11,412.5 L42.5,397.5 L80,380 L108.75,367.5 L117.5,370"/><path d="M137.5,337.5 L160,347.5 L162.5,357.5 L152.5,370 L160,377.5"/><path d="M114,427.5 L134.5,414 L154.6,413"/><path d="M136,410 L134,425 L132.5,436 L115,451 L110,467 L96,482 L80,511 L83.75,572"/><path d="M287.2,102.9 L270.4,111.3 L269.4,121.7 L270.9,144.2"/><path d="M214,127.3 L221.6,137.6 L246.9,142.3 L260,148"/><path d="M310.7,71 L323.8,84.1 L346.3,85.1"/><path d="M337,86 L342.6,93.5 L350,101"/><path d="M340,84 L362,79 L376,84 L390,83 L424,78 L458,74 L462,71"/><path d="M340,91 L346,99 L360,105 L380,109 L404,107 L428,97 L444,85 L458,74"/><path d="M360,90 L376,95 L400,96 L400,108"/><path d="M390,83 L390,91"/><path d="M410,99 L416,107 L426,107 L434,91 L440,83"/><path d="M458,79 L444,113"/><path d="M460,75 L488,84"/><path d="M470,83 L464,91"/><path d="M302.5,483.2 L317.3,486.6 L337.7,479.8 L349,481 L376.4,465 L385.5,444.5"/><path d="M302.5,483.2 L308.2,487.7 L302.5,510.5 L285.5,537.7 L282,572"/><path d="M302.5,510.5 L321.8,513.9 L340,521.8 L363.9,541.1"/><path d="M337.7,479.8 L325.2,499 L321.8,513.9"/><path d="M522,437 L560,472.5 L575,487.5 L576,495 L550,498.75 L543.75,515 L545,571"/><path d="M442.5,450 L455,465 L472.5,502.5 L465,550 L467.5,552.5 L495,571"/><path d="M430,480 L447.5,477.5 L452.5,497.5 L442.5,520 L427.5,530 L415,510 L430,480"/><path d="M462.5,492.5 L480,477.5 L482.5,475"/><path d="M420,490 L412,487"/><path d="M445,505 L452,512"/><path d="M424,512 L418,520"/><path d="M437,482 L440,470"/><path d="M385,440 L380,455"/><path d="M670,71 L667.8,75.5 L663.3,95.8 L654.3,111.5 L625,140.8 L611.5,160 L600,180 L590,190 L575,195"/><path d="M443.4,171 L444.9,163.6 L463.9,151.9 L478.5,144.6 L482.9,143.9"/><path d="M462.4,153.4 L461.7,165.1 L459.5,165.8"/><path d="M449.2,178.2 L463.9,175.3 L474.1,181.2 L477,184.1"/><path d="M469.7,163.6 L475.6,166.5 L478.5,172.4"/><path d="M478.5,153.4 L481.4,165.1 L482.9,188.5 L484.3,198.7"/><path d="M466.8,188.5 L475.6,192.9 L478.5,198.7"/><path d="M440.5,194.3 L449.2,192.9"/></g>
<g fill="none" stroke="#d2d2d2" stroke-width="1.2"><path d="M254.5,462.7 V494.5 M234,462.7 H275 M234,475.2 H287.5 M243.2,487.7 H254.5 M238.6,469.5 L246,469.5 L246,475"/></g>
<g fill="none" stroke="#c3c3c3" stroke-width="1.3" stroke-linejoin="round"><path d="M216,270 L217.5,240 L225,233.75 L242.5,230 L255,207.5 L282.5,180 L285,172.5"/><path d="M216,270 L217.5,297.5"/><path d="M177.4,298 L275,305 L316,318 L419,326 L432,333.5"/><path d="M275,305 L257.4,323.9 L217.5,345 L185.2,365.2"/><path d="M316,318 L298,338.7 L334,395.5 L329,412"/><path d="M329,412 L388.4,418.7 L401.3,405.8 L465.8,402"/><path d="M237.5,428.75 L330,413.75"/><path d="M251,370 L232.5,385 L213.75,398 L223,420 L236.9,428.75"/><path d="M493.6,200 L494.4,217.2 L499.6,229.3 L520.2,238.7 L525.4,244.8 L503,284.3 L514,320 L516,340"/><path d="M491.9,127 L494,200"/></g>
<path fill="#a6d4fe" d="M730,71 L726,85 L727,94 L740,100 L742,107 L708.4,112.7 L692.6,122.8 L688.1,134 L647.6,160 L642,164 L636.6,170 L622.6,189.3 L608.6,210.3 L592.8,226 L570,243.5 L552.5,264.6 L540,285 L536,299 L533,303 L534.5,345 L536,385 L547,405 L549,407 L582,410 L601,427 L603,442 L600,428 L592,424 L570,424 L562,442 L563,458 L571,468 L596,477 L606,467 L627,465 L637,499 L605,525 L596,550 L609,571 L787,571 L787,82 L777,71 Z"/>
<path fill="#f8f8f4" d="M627,465 L633,462 L637,465 L643,456 L655,453 L661,469 L652,477 L653,481 L637,499 Z"/>
<g fill="none" stroke="#c2e3c8" stroke-width="1.3"><path d="M581.7,434.7 L590,426.5 L592,425.5"/><path d="M571.3,466.8 L581.6,452.3 L582.7,444 L577.5,442"/><path d="M562,443.5 L575,445"/></g>
<g fill="none" stroke="#9fcdf7" stroke-linejoin="round" stroke-linecap="round"><path stroke-width="1.6" d="M287.5,71 L330,115 L342.5,109 L367.5,129 L385,156 L420,165 L428,177 L430.2,195.8 L434.6,198.7 L475.6,211.9 L481.4,215 L485,225.8 L490,268.8 L499.6,279.2"/><path stroke-width="1.6" d="M11,466 L33.75,437.5 L40,443.75 L56,436 L62.5,423.75 L86,416 L90,426 L97.5,428.75 L105,422.5 L127.5,420.5 L160,400 L180,400.75 L210,427.5 L257.5,456.25 L268.75,452.5 L267.5,443.75 L280,435 L291.25,435 L295,442.5 L295,452.5 L305,467.5 L317.5,462 L346.25,473.75 L357.5,466.25 L360,461.25 L375,452.5 L380,440 L392.5,400 L400,395 L417.5,403.75 L470,401 L487.5,381.25 L530,383.75 L545,402.5"/><path stroke-width="4" stroke="#a6d4fe" d="M490,268.8 L499.6,279.2 L532.3,299"/></g>
<path fill="none" stroke="#b3aeb6" stroke-width="2.8" d="M11,485 L62.5,462 L101,446 L140,429 L210,387.5 L248,364 L282,341 L316,317 L332.2,300 L339,290.8 L359,268.4 L372.5,252.8 L383.7,232.6 L392.6,214.7 L403.8,194.6 L415,181.2 L428.4,170 L447.5,152.5 L485,136 L530,127.5 L630,107.5 L672.5,89 L692.5,71"/><path fill="none" stroke="#e4e0e4" stroke-width="0.9" d="M11,485 L62.5,462 L101,446 L140,429 L210,387.5 L248,364 L282,341 L316,317 L332.2,300 L339,290.8 L359,268.4 L372.5,252.8 L383.7,232.6 L392.6,214.7 L403.8,194.6 L415,181.2 L428.4,170 L447.5,152.5 L485,136 L530,127.5 L630,107.5 L672.5,89 L692.5,71"/>
<path fill="none" stroke="#b3aeb6" stroke-width="2" d="M9.8,482.3 L12.2,487.7 M44.5,466.8 L46.9,472.2 M79.4,451.7 L81.7,457.2 M114.4,436.9 L116.8,442.4 M148.2,420.6 L151.3,425.8 M180.9,401.2 L184.0,406.4 M213.5,381.8 L216.7,386.9 M245.8,361.8 L249.0,366.9 M277.2,340.6 L280.6,345.6 M308.3,318.8 L311.7,323.7 M334.0,292.5 L338.9,296.0 M359.1,263.6 L363.7,267.6 M380.1,232.9 L385.3,235.8 M397.8,199.3 L403.0,202.2 M423.4,170.2 L427.3,174.8 M453.7,146.5 L456.1,152.0 M489.5,132.1 L490.6,138.0 M526.8,125.0 L528.0,130.9 M564.1,117.6 L565.3,123.5 M601.3,110.2 L602.5,116.1 M637.4,101.0 L639.8,106.5 M671.3,86.1 L675.3,90.5"/>
<path fill="none" stroke="#f7a56d" stroke-width="2.6" stroke-linejoin="round" stroke-linecap="round" d="M517.7,92 L530.8,101.6"/><path fill="none" stroke="#fcc9a0" stroke-width="0.9" stroke-linejoin="round" stroke-linecap="round" d="M517.7,92 L530.8,101.6"/>
<path fill="none" stroke="#f7a56d" stroke-width="2.6" stroke-linejoin="round" stroke-linecap="round" d="M501.9,84.1 L517.7,92 L521.2,97.3 L515,106.9 L515,110"/><path fill="none" stroke="#fcc9a0" stroke-width="0.9" stroke-linejoin="round" stroke-linecap="round" d="M501.9,84.1 L517.7,92 L521.2,97.3 L515,106.9 L515,110"/>
<path fill="none" stroke="#f7a56d" stroke-width="2.6" stroke-linejoin="round" stroke-linecap="round" d="M516.8,117.4 L571,98 L609.6,71"/><path fill="none" stroke="#fcc9a0" stroke-width="0.9" stroke-linejoin="round" stroke-linecap="round" d="M516.8,117.4 L571,98 L609.6,71"/>
<circle cx="494.9" cy="81.9" r="4.5" fill="none" stroke="#f7a56d" stroke-width="3"/><circle cx="494.9" cy="81.9" r="4.5" fill="none" stroke="#fcc9a0" stroke-width="1"/>
<path fill="none" stroke="#f7a56d" stroke-width="4.5" stroke-linejoin="round" stroke-linecap="round" d="M491.9,127 L494.9,71"/><path fill="none" stroke="#fcc9a0" stroke-width="1.6" stroke-linejoin="round" stroke-linecap="round" d="M491.9,127 L494.9,71"/>
<path fill="none" stroke="#f7a56d" stroke-width="2.6" stroke-linejoin="round" stroke-linecap="round" d="M150.6,287.8 L174,287"/><path fill="none" stroke="#fcc9a0" stroke-width="0.9" stroke-linejoin="round" stroke-linecap="round" d="M150.6,287.8 L174,287"/>
<path fill="none" stroke="#f7a56d" stroke-width="2.6" stroke-linejoin="round" stroke-linecap="round" d="M177.4,298 L200.6,298.6"/><path fill="none" stroke="#fcc9a0" stroke-width="0.9" stroke-linejoin="round" stroke-linecap="round" d="M177.4,298 L200.6,298.6"/>
<path fill="none" stroke="#f7a56d" stroke-width="4.8" stroke-linejoin="round" stroke-linecap="round" d="M138.1,71 L149.4,98.5 L152.5,113.5 L205,133.5 L217.5,141 L247,153 L275,170 L330,195 L345,215 L375,247 L415,289 L435,302 L447,317 L451.4,330 L453.8,340 L462,352.8 L463.8,364.5 L477,364.5"/><path fill="none" stroke="#fcc9a0" stroke-width="1.8" stroke-linejoin="round" stroke-linecap="round" d="M138.1,71 L149.4,98.5 L152.5,113.5 L205,133.5 L217.5,141 L247,153 L275,170 L330,195 L345,215 L375,247 L415,289 L435,302 L447,317 L451.4,330 L453.8,340 L462,352.8 L463.8,364.5 L477,364.5"/>
<path fill="none" stroke="#f7a56d" stroke-width="4.8" stroke-linejoin="round" stroke-linecap="round" d="M515,355 L516,380 L512.5,405 L470,402.5 L466,415 L457.5,419 L444,437 L436,450 L400.5,506.8 L409.3,520 L402.3,535 L374.2,563 L355,571"/><path fill="none" stroke="#fcc9a0" stroke-width="1.8" stroke-linejoin="round" stroke-linecap="round" d="M515,355 L516,380 L512.5,405 L470,402.5 L466,415 L457.5,419 L444,437 L436,450 L400.5,506.8 L409.3,520 L402.3,535 L374.2,563 L355,571"/>
<path fill="none" stroke="#000" stroke-opacity="0.07" stroke-width="11" stroke-linejoin="round" d="M198.7,400 L196.1,393 L189.3,374 L182.4,356.8 L175.5,334.4 L174,300 L175,286 L178.4,265.4 L184.4,249.9 L194.75,231 L199.9,217.2 L210.2,200 L216.6,188.8 L233.8,173.4 L244.2,164.8 L265,149.3 L292.5,138.75 L325,130 L380,126.5 L430,123 L490,120 L515,110.4 L576.3,85.9 L606,71"/>
<path fill="none" stroke="#f7a56d" stroke-width="5.5" stroke-linejoin="round" stroke-linecap="round" d="M270.5,572 L260,545 L211,430 L198.7,400 L196.1,393"/><path fill="none" stroke="#fcc9a0" stroke-width="2.2" stroke-linejoin="round" stroke-linecap="round" d="M270.5,572 L260,545 L211,430 L198.7,400 L196.1,393"/>
<g fill="none" stroke-linejoin="round" stroke-linecap="butt"><path stroke="#f6a36c" stroke-width="8.5" d="M198.7,400 L196.1,393 L189.3,374 L182.4,356.8 L175.5,334.4 L174,300 L175,286 L178.4,265.4 L184.4,249.9 L194.75,231 L199.9,217.2 L210.2,200 L216.6,188.8 L233.8,173.4 L244.2,164.8 L265,149.3 L292.5,138.75 L325,130 L380,126.5 L430,123 L490,120 L515,110.4 L576.3,85.9 L606,71"/><path stroke="#fbc9a2" stroke-width="5.9" d="M198.7,400 L196.1,393 L189.3,374 L182.4,356.8 L175.5,334.4 L174,300 L175,286 L178.4,265.4 L184.4,249.9 L194.75,231 L199.9,217.2 L210.2,200 L216.6,188.8 L233.8,173.4 L244.2,164.8 L265,149.3 L292.5,138.75 L325,130 L380,126.5 L430,123 L490,120 L515,110.4 L576.3,85.9 L606,71"/><path stroke="#f7aa76" stroke-width="3.0999999999999996" d="M198.7,400 L196.1,393 L189.3,374 L182.4,356.8 L175.5,334.4 L174,300 L175,286 L178.4,265.4 L184.4,249.9 L194.75,231 L199.9,217.2 L210.2,200 L216.6,188.8 L233.8,173.4 L244.2,164.8 L265,149.3 L292.5,138.75 L325,130 L380,126.5 L430,123 L490,120 L515,110.4 L576.3,85.9 L606,71"/><path stroke="#f3d9c6" stroke-width="0.9" d="M198.7,400 L196.1,393 L189.3,374 L182.4,356.8 L175.5,334.4 L174,300 L175,286 L178.4,265.4 L184.4,249.9 L194.75,231 L199.9,217.2 L210.2,200 L216.6,188.8 L233.8,173.4 L244.2,164.8 L265,149.3 L292.5,138.75 L325,130 L380,126.5 L430,123 L490,120 L515,110.4 L576.3,85.9 L606,71"/></g>
<g fill="#a6d4fe"><circle cx="479" cy="96" r="0.9"/><circle cx="483" cy="96.5" r="0.9"/><circle cx="471" cy="111" r="1"/><circle cx="476" cy="108" r="1"/><circle cx="482" cy="108" r="1"/></g>
<g font-family="Liberation Sans, sans-serif" stroke="#fff" stroke-width="3" paint-order="stroke" stroke-linejoin="round">
<text x="112" y="112" font-size="14.5" fill="#333">Redcloak</text>
<text x="157" y="375" font-size="15" fill="#222" text-anchor="middle">Kirktown of</text>
<text x="157" y="392" font-size="15" fill="#222" text-anchor="middle">Fetteresso</text>
<text x="477.5" y="367" font-size="14.8" fill="#222">Stonehaven</text>
<text x="579" y="222.5" font-size="10" fill="#4d4d4d" text-anchor="middle" letter-spacing="0.2">COWIE</text>
<text x="376" y="181" font-size="11" fill="#777" text-anchor="middle" stroke-width="2">Mackie</text>
<text x="376" y="193" font-size="11" fill="#777" text-anchor="middle" stroke-width="2">Academy</text>
</g>
<g>
<rect x="244" y="154.7" width="32.3" height="13.9" rx="2" fill="#6aa86f" stroke="#fff" stroke-width="1"/>
<text x="260.5" y="165" font-size="9.5" font-weight="bold" fill="#efe6a2" text-anchor="middle" font-family="Liberation Sans, sans-serif" letter-spacing="0.3">A957</text>
<rect x="491.1" y="107.6" width="25.5" height="15.2" rx="2" fill="#6aa86f" stroke="#fff" stroke-width="1"/>
<text x="504" y="118.6" font-size="9.5" font-weight="bold" fill="#efe6a2" text-anchor="middle" font-family="Liberation Sans, sans-serif" letter-spacing="0.3">A92</text>
<text x="0" y="0" font-size="12" fill="#1a1a1a" font-family="Liberation Sans, sans-serif" stroke="#fff" stroke-width="2.5" paint-order="stroke" transform="translate(280.5,173.5) rotate(27.5)">Slug Road</text>
</g>
<g stroke-width="1">
<circle cx="290.6" cy="167.5" r="5.8" fill="#f05424" stroke="#7c2a12"/>
<circle cx="323.8" cy="166.6" r="5.8" fill="#f05424" stroke="#7c2a12"/>
<circle cx="239.7" cy="187.5" r="5.8" fill="#f05424" stroke="#7c2a12"/>
<circle cx="295.6" cy="225" r="5.8" fill="#f05424" stroke="#7c2a12"/>
<circle cx="314.4" cy="221.3" r="5.8" fill="#f05424" stroke="#7c2a12"/>
<circle cx="327.8" cy="226.6" r="5.8" fill="#f05424" stroke="#7c2a12"/>
<circle cx="223" cy="233.8" r="5.8" fill="#f05424" stroke="#7c2a12"/>
<circle cx="196" cy="255.3" r="5.8" fill="#f05424" stroke="#7c2a12"/>
<circle cx="192.3" cy="293" r="5.8" fill="#f05424" stroke="#7c2a12"/>
<circle cx="278.8" cy="300.3" r="5.8" fill="#f05424" stroke="#7c2a12"/>
<circle cx="233.4" cy="310.5" r="5.8" fill="#f05424" stroke="#7c2a12"/>
<circle cx="251.7" cy="310.5" r="5.8" fill="#f05424" stroke="#7c2a12"/>
<circle cx="216.1" cy="318.7" r="5.8" fill="#f05424" stroke="#7c2a12"/>
<circle cx="205.3" cy="332.9" r="5.8" fill="#f05424" stroke="#7c2a12"/>
<circle cx="225.4" cy="397.9" r="5.8" fill="#f05424" stroke="#7c2a12"/>
<circle cx="233.4" cy="411.6" r="5.8" fill="#f05424" stroke="#7c2a12"/>
<circle cx="251.5" cy="410.8" r="5.8" fill="#f05424" stroke="#7c2a12"/>
<circle cx="338.3" cy="332.8" r="5.8" fill="#f05424" stroke="#7c2a12"/>
<circle cx="325.2" cy="351.1" r="5.8" fill="#f05424" stroke="#7c2a12"/>
<circle cx="313.8" cy="371.2" r="5.8" fill="#f05424" stroke="#7c2a12"/>
<circle cx="304.8" cy="383.1" r="5.8" fill="#f05424" stroke="#7c2a12"/>
<circle cx="341.2" cy="397.3" r="5.8" fill="#f05424" stroke="#7c2a12"/>
<circle cx="443.6" cy="316" r="5.8" fill="#f05424" stroke="#7c2a12"/>
<circle cx="429.7" cy="337.4" r="5.8" fill="#f05424" stroke="#7c2a12"/>
<circle cx="428.4" cy="343.9" r="5.8" fill="#f05424" stroke="#7c2a12"/>
<circle cx="429.2" cy="349" r="5.8" fill="#f05424" stroke="#7c2a12"/>
<circle cx="434.1" cy="352.9" r="5.8" fill="#f05424" stroke="#7c2a12"/>
<circle cx="440" cy="353.4" r="5.8" fill="#f05424" stroke="#7c2a12"/>
<circle cx="422.7" cy="368.2" r="5.8" fill="#f05424" stroke="#7c2a12"/>
<circle cx="409.3" cy="382.8" r="5.8" fill="#f05424" stroke="#7c2a12"/>
<circle cx="474.6" cy="203.7" r="5.8" fill="#f05424" stroke="#7c2a12"/>
<circle cx="607.2" cy="209.9" r="5.8" fill="#f05424" stroke="#7c2a12"/>
<circle cx="429.7" cy="251.5" r="5.8" fill="#f05424" stroke="#7c2a12"/>
<circle cx="513.5" cy="353.3" r="5.8" fill="#f05424" stroke="#7c2a12"/>
<circle cx="508.8" cy="407.5" r="5.8" fill="#f05424" stroke="#7c2a12"/>
<circle cx="555.5" cy="422" r="5.8" fill="#f05424" stroke="#7c2a12"/>
<circle cx="438.3" cy="496" r="5.8" fill="#f05424" stroke="#7c2a12"/>
<circle cx="150.6" cy="287.6" r="5.8" fill="#0f7a69" stroke="#39a48d"/>
<circle cx="132" cy="344" r="5.8" fill="#0f7a69" stroke="#39a48d"/>
<circle cx="199.6" cy="381.9" r="5.8" fill="#0f7a69" stroke="#39a48d"/>
<circle cx="136.1" cy="408.3" r="5.8" fill="#0f7a69" stroke="#39a48d"/>
<circle cx="350.5" cy="392.4" r="5.8" fill="#0f7a69" stroke="#39a48d"/>
<circle cx="385.6" cy="363.2" r="5.8" fill="#0f7a69" stroke="#39a48d"/>
<circle cx="370.3" cy="416.9" r="5.8" fill="#0f7a69" stroke="#39a48d"/>
<circle cx="353" cy="443.5" r="5.8" fill="#0f7a69" stroke="#39a48d"/>
<circle cx="426.2" cy="300.7" r="5.8" fill="#0f7a69" stroke="#39a48d"/>
<circle cx="437.4" cy="343.4" r="5.8" fill="#0f7a69" stroke="#39a48d"/>
<circle cx="441.4" cy="365.1" r="5.8" fill="#0f7a69" stroke="#39a48d"/>
<circle cx="422.7" cy="379.4" r="5.8" fill="#0f7a69" stroke="#39a48d"/>
<circle cx="452.7" cy="398.3" r="5.8" fill="#0f7a69" stroke="#39a48d"/>
<circle cx="472.5" cy="151" r="5.8" fill="#0f7a69" stroke="#39a48d"/>
<circle cx="443.4" cy="179.6" r="5.8" fill="#0f7a69" stroke="#39a48d"/>
<circle cx="483" cy="178.6" r="5.8" fill="#0f7a69" stroke="#39a48d"/>
<circle cx="456" cy="196.3" r="5.8" fill="#0f7a69" stroke="#39a48d"/>
<circle cx="571.9" cy="208" r="5.8" fill="#0f7a69" stroke="#39a48d"/>
<circle cx="492.6" cy="279.3" r="5.8" fill="#0f7a69" stroke="#39a48d"/>
<circle cx="487" cy="289.3" r="5.8" fill="#0f7a69" stroke="#39a48d"/>
<circle cx="393.5" cy="257.4" r="5.8" fill="#0f7a69" stroke="#39a48d"/>
<circle cx="492.9" cy="324.5" r="5.8" fill="#0f7a69" stroke="#39a48d"/>
<circle cx="482" cy="336.6" r="5.8" fill="#0f7a69" stroke="#39a48d"/>
<circle cx="493.2" cy="338.1" r="5.8" fill="#0f7a69" stroke="#39a48d"/>
<circle cx="523.9" cy="335.3" r="5.8" fill="#0f7a69" stroke="#39a48d"/>
<circle cx="505.3" cy="362.9" r="5.8" fill="#0f7a69" stroke="#39a48d"/>
<circle cx="523.9" cy="378" r="5.8" fill="#0f7a69" stroke="#39a48d"/>
<circle cx="491.5" cy="384.8" r="5.8" fill="#0f7a69" stroke="#39a48d"/>
<circle cx="539.2" cy="432.8" r="5.8" fill="#0f7a69" stroke="#39a48d"/>
<circle cx="535.9" cy="441.4" r="5.8" fill="#0f7a69" stroke="#39a48d"/>
<circle cx="549.8" cy="441.1" r="5.8" fill="#0f7a69" stroke="#39a48d"/>
<circle cx="437.75" cy="530.5" r="5.8" fill="#0f7a69" stroke="#39a48d"/>
</g>
</svg>
<div class="ctl" style="top:9px;height:62px;"><svg width="31" height="62">
<path d="M15.8,9.8 V21.8 M9.8,15.8 H21.8" stroke="#666" stroke-width="2" fill="none"/>
<rect x="1" y="30" width="29" height="1" fill="#ececec"/>
<path d="M10.2,46.8 H21.6" stroke="#666" stroke-width="2" fill="none"/>
</svg></div>
<div class="ctl" style="top:75px;height:31px;"><svg width="31" height="31">
<path d="M13.8,11 H18.4 L20.9,19.7 H10.6 Z" fill="#777"/>
</svg></div>
<div class="ctl" style="top:110px;height:31px;"><svg width="31" height="31">
<path d="M15.9,9.5 L19.5,15.6 L15.9,21.8 L12.4,15.6 Z" fill="#777"/>
<circle cx="15.9" cy="14.2" r="1.5" fill="#fff"/>
</svg></div>
<div id="logo"><svg width="16" height="16" style="position:absolute;left:0;top:0">
<rect x="0" y="0" width="6.7" height="6.7" fill="#f25022"/>
<rect x="7.3" y="0" width="6.7" height="6.7" fill="#7fba00"/>
<rect x="0" y="7.3" width="6.7" height="6.7" fill="#00a4ef"/>
<rect x="7.3" y="7.3" width="6.7" height="6.7" fill="#ffb900"/>
</svg><div style="position:absolute;left:18px;top:-1px;font-size:11.5px;line-height:16px;color:#666;white-space:nowrap;">Microsoft Azure</div></div>
<div id="attr"><span>©2025 TomTom</span>&nbsp; <span>©2025 OSM</span>&nbsp; <span style="position:relative;color:#111">Feedback<span style="position:absolute;left:0;right:0;top:10.5px;height:1.2px;background:#333"></span></span></div>
</div>
</body></html>
